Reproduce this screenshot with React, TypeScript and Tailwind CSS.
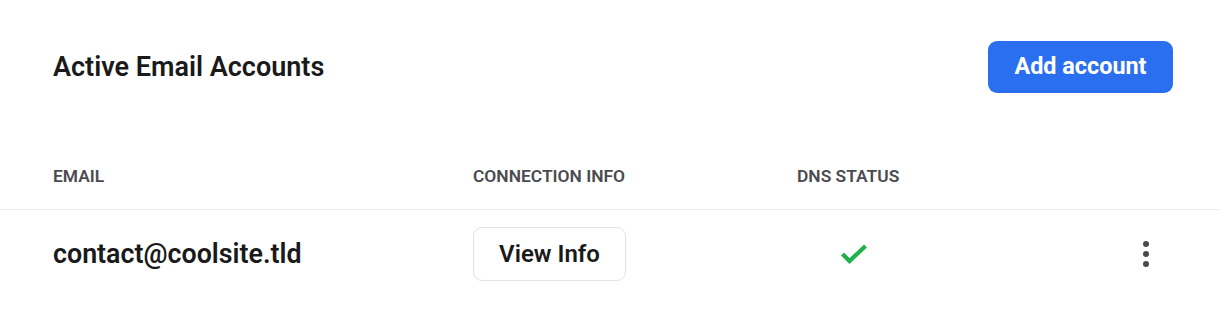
export default function App() {
  return (
    <div className="min-h-screen w-full bg-white font-['Roboto',sans-serif] text-[#1c1c1e]">
      {/* Header */}
      <div className="flex items-center justify-between pl-[53px] pr-[47px] pt-[41px]">
        <h1 className="text-[27px] font-semibold text-[#1a1a1a]">
          Active Email Accounts
        </h1>
        <button className="h-[52px] w-[185px] rounded-[9px] bg-[#2a6fef] text-[23.4px] font-bold text-white">
          Add account
        </button>
      </div>

      {/* Table head */}
      <div className="grid grid-cols-[420px_324px_1fr_auto] border-b border-[#ececec] pl-[53px] pr-[71px] pt-[71px] pb-[21px] text-[17.4px] leading-6 font-semibold uppercase text-[#4b4b4f]">
        <div>Email</div>
        <div>Connection Info</div>
        <div>DNS Status</div>
        <div />
      </div>

      {/* Rows */}
      <div className="grid grid-cols-[420px_324px_1fr_auto] items-center pl-[53px] pr-[71px] pt-[17px] pb-[17px]">
        <div className="text-[26.8px] font-semibold text-[#1a1a1a]">
          contact@coolsite.tld
        </div>
        <div>
          <button className="h-[54px] w-[153px] rounded-[9px] border border-[#e3e3e3] bg-white text-[24px] font-semibold text-[#1a1a1a]">
            View Info
          </button>
        </div>
        <div className="pl-[43px]">
          <svg width="28" height="22" viewBox="0 0 28 22" fill="none">
            <polyline
              points="2.5,11 9.5,18 25.5,3"
              stroke="#22b04b"
              strokeWidth="4.2"
              strokeLinejoin="miter"
            />
          </svg>
        </div>
        <div className="flex justify-end">
          <svg width="6" height="26" viewBox="0 0 6 26" fill="#4a4a4d">
            <circle cx="3" cy="3" r="3" />
            <circle cx="3" cy="13" r="3" />
            <circle cx="3" cy="23" r="3" />
          </svg>
        </div>
      </div>
    </div>
  );
}
